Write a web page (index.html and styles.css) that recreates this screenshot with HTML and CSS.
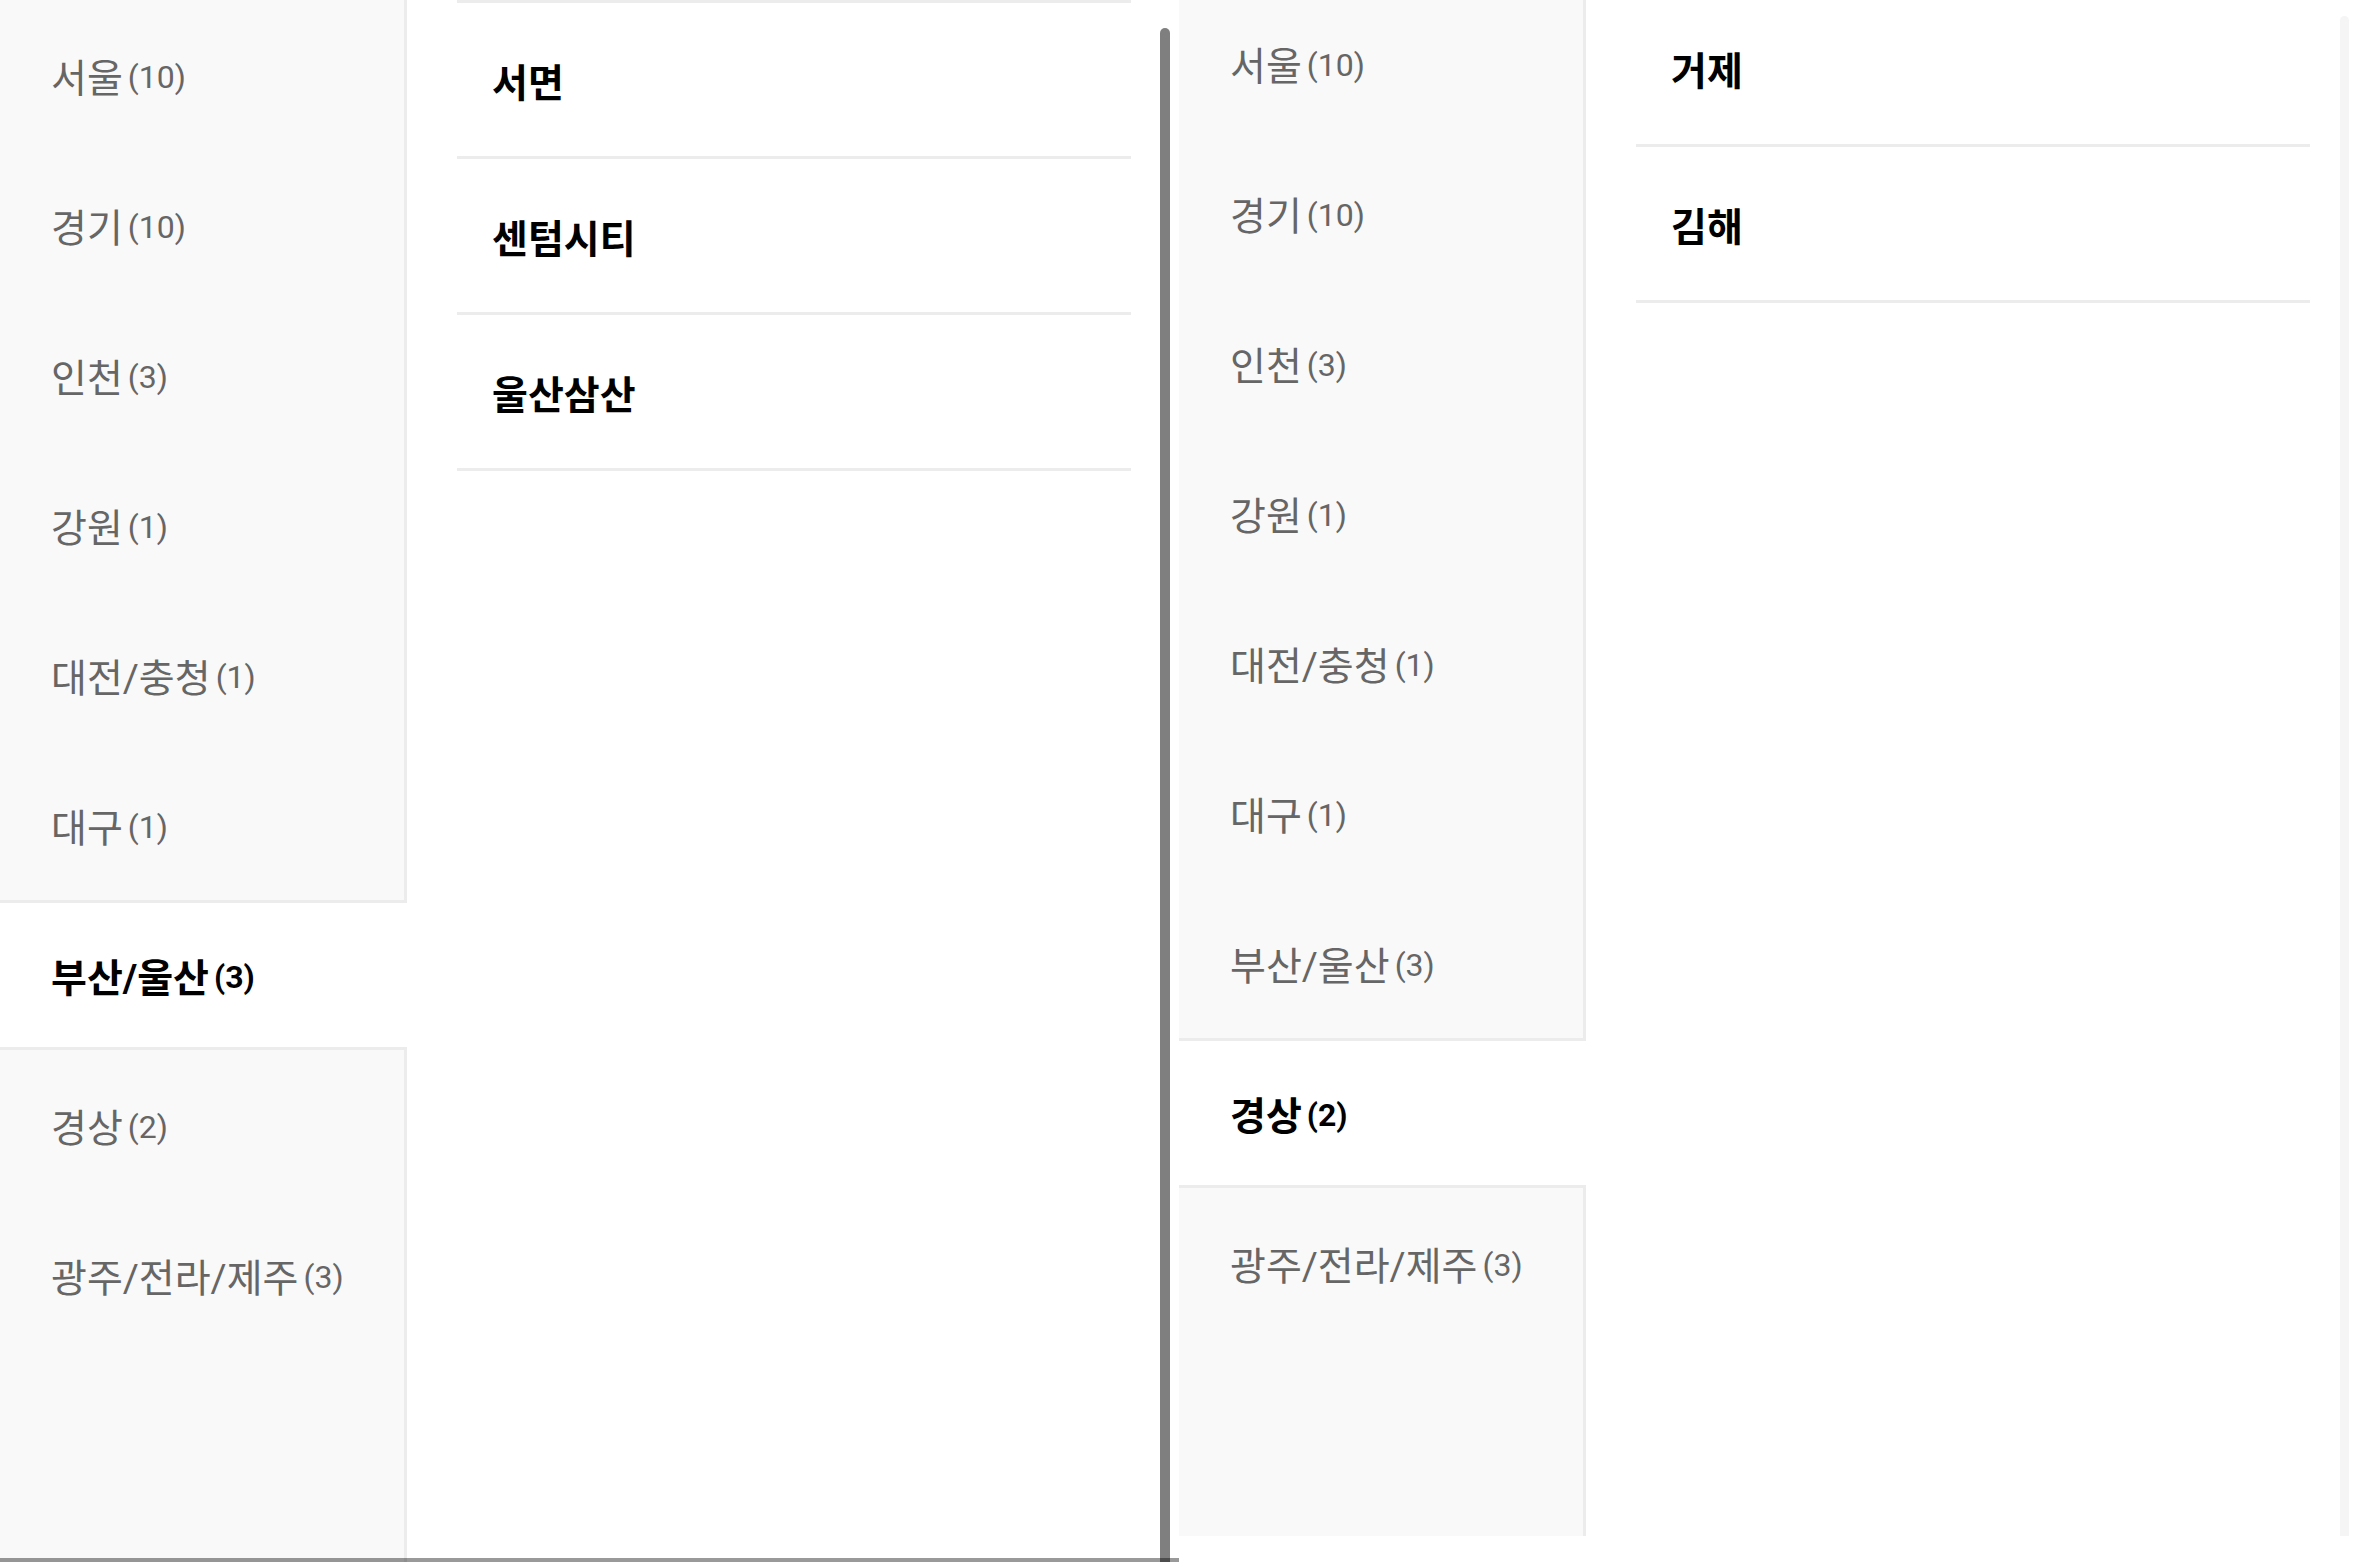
FILE: index.html
```html
<!DOCTYPE html>
<html lang="ko">
<head>
  <meta charset="UTF-8" />
  <meta name="viewport" content="width=device-width, initial-scale=1.0" />
  <title>지역 선택</title>
  <link rel="stylesheet" href="styles.css">
</head>
<body>
  <div class="screens">

    <!-- 첫 번째 화면: 부산/울산 선택 -->
    <section class="screen screen-a">
      <div class="page">
        <nav class="regions">
          <div class="region">서울<span class="count">(10)</span></div>
          <div class="region">경기<span class="count">(10)</span></div>
          <div class="region">인천<span class="count">(3)</span></div>
          <div class="region">강원<span class="count">(1)</span></div>
          <div class="region">대전/충청<span class="count">(1)</span></div>
          <div class="region">대구<span class="count">(1)</span></div>
          <div class="region active">부산/울산<span class="count">(3)</span></div>
          <div class="region">경상<span class="count">(2)</span></div>
          <div class="region">광주/전라/제주<span class="count">(3)</span></div>
        </nav>
        <div class="places">
          <ul>
            <li>서면</li>
            <li>센텀시티</li>
            <li>울산삼산</li>
          </ul>
        </div>
      </div>
      <div class="scroll-v"></div>
      <div class="scroll-h"></div>
    </section>

    <!-- 두 번째 화면: 경상 선택 -->
    <section class="screen screen-b">
      <div class="page">
        <nav class="regions">
          <div class="region">서울<span class="count">(10)</span></div>
          <div class="region">경기<span class="count">(10)</span></div>
          <div class="region">인천<span class="count">(3)</span></div>
          <div class="region">강원<span class="count">(1)</span></div>
          <div class="region">대전/충청<span class="count">(1)</span></div>
          <div class="region">대구<span class="count">(1)</span></div>
          <div class="region">부산/울산<span class="count">(3)</span></div>
          <div class="region active">경상<span class="count">(2)</span></div>
          <div class="region">광주/전라/제주<span class="count">(3)</span></div>
        </nav>
        <div class="places">
          <ul>
            <li>거제</li>
            <li>김해</li>
          </ul>
        </div>
      </div>
      <div class="scroll-v faded"></div>
    </section>

  </div>
</body>
</html>
```

FILE: styles.css
```css
body {
  margin: 0;
  background: #fff;
  font-family: Roboto, "Noto Sans CJK KR", sans-serif;
}

.screens {
  display: flex;
  align-items: flex-start;
}

.screen {
  position: relative;
  width: 1179px;
  overflow: hidden;
}

.screen-a {
  height: 1562px;
}

.screen-b {
  height: 1536px;
}

.page {
  display: flex;
  height: 100%;
}

/* 두 번째 화면은 살짝 스크롤된 상태 */
.screen-b .page {
  margin-top: -12px;
  height: calc(100% + 12px);
}

.regions {
  width: 404px;
  flex-shrink: 0;
  background: #f9f9f9;
  border-right: 3px solid #ececec;
}

.region {
  box-sizing: border-box;
  height: 150px;
  display: flex;
  align-items: center;
  padding-left: 51px;
  font-size: 39px;
  color: #666;
}

.region .count {
  font-size: 32px;
  margin-left: 5px;
  padding-top: 4px;
}

.region.active {
  margin-right: -3px;
  background: #fff;
  border-top: 3px solid #ececec;
  border-bottom: 3px solid #ececec;
  color: #000;
  font-weight: bold;
}

.places {
  flex: 1;
  padding: 0 48px 0 50px;
}

.places ul {
  list-style: none;
  margin: 0;
  padding: 0;
  border-top: 3px solid #ececec;
}

.places li {
  height: 153px;
  display: flex;
  align-items: center;
  padding-left: 35px;
  border-bottom: 3px solid #ececec;
  font-size: 39px;
  font-weight: bold;
  color: #000;
}

.scroll-v {
  position: absolute;
  top: 28px;
  bottom: 0;
  right: 9px;
  width: 10px;
  border-radius: 5px 5px 0 0;
  background: rgba(0, 0, 0, 0.5);
}

.scroll-v.faded {
  top: 16px;
  width: 9px;
  background: #f5f5f5;
}

.scroll-h {
  position: absolute;
  left: 0;
  right: 0;
  bottom: 0;
  height: 4px;
  background: rgba(0, 0, 0, 0.4);
}
```
